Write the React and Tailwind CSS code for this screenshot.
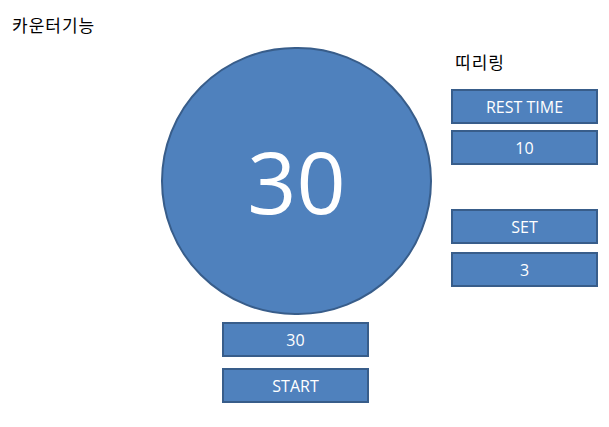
import React from "react";

const Box = ({ children, className = "" }) => (
  <div
    className={`flex h-[35px] w-[147px] items-center justify-center border-2 border-[#385d8a] bg-[#4f81bd] text-[16px] text-white ${className}`}
  >
    {children}
  </div>
);

const App = () => {
  return (
    <div
      className="h-[427px] w-[609px] overflow-hidden bg-white text-black"
      style={{ fontFamily: '"Open Sans", "Noto Sans CJK KR", sans-serif' }}
    >
      {/* Title */}
      <div className="h-[47px] pl-[12px] pt-[14px] text-[17px] leading-[24px] tracking-[1px]">카운터기능</div>

      <div className="flex">
        {/* Counter column */}
        <div className="ml-[161px] flex w-[271px] flex-col items-center">
          <div className="flex h-[268px] w-[271px] items-center justify-center rounded-full border-2 border-[#385d8a] bg-[#4f81bd]">
            <span className="text-[86px] leading-none text-white">30</span>
          </div>
          <Box className="mt-[7px] -translate-x-[1px]">30</Box>
          <Box className="mt-[11px] -translate-x-[1px]">START</Box>
        </div>

        {/* Settings column */}
        <div className="ml-[19px] flex flex-col">
          <div className="mt-[4px] pl-[4px] text-[17px] leading-[24px] tracking-[1px]">띠리링</div>
          <Box className="mt-[14px]">REST TIME</Box>
          <Box className="mt-[6px]">10</Box>
          <Box className="mt-[44px]">SET</Box>
          <Box className="mt-[8px]">3</Box>
        </div>
      </div>
    </div>
  );
};

export default App;
